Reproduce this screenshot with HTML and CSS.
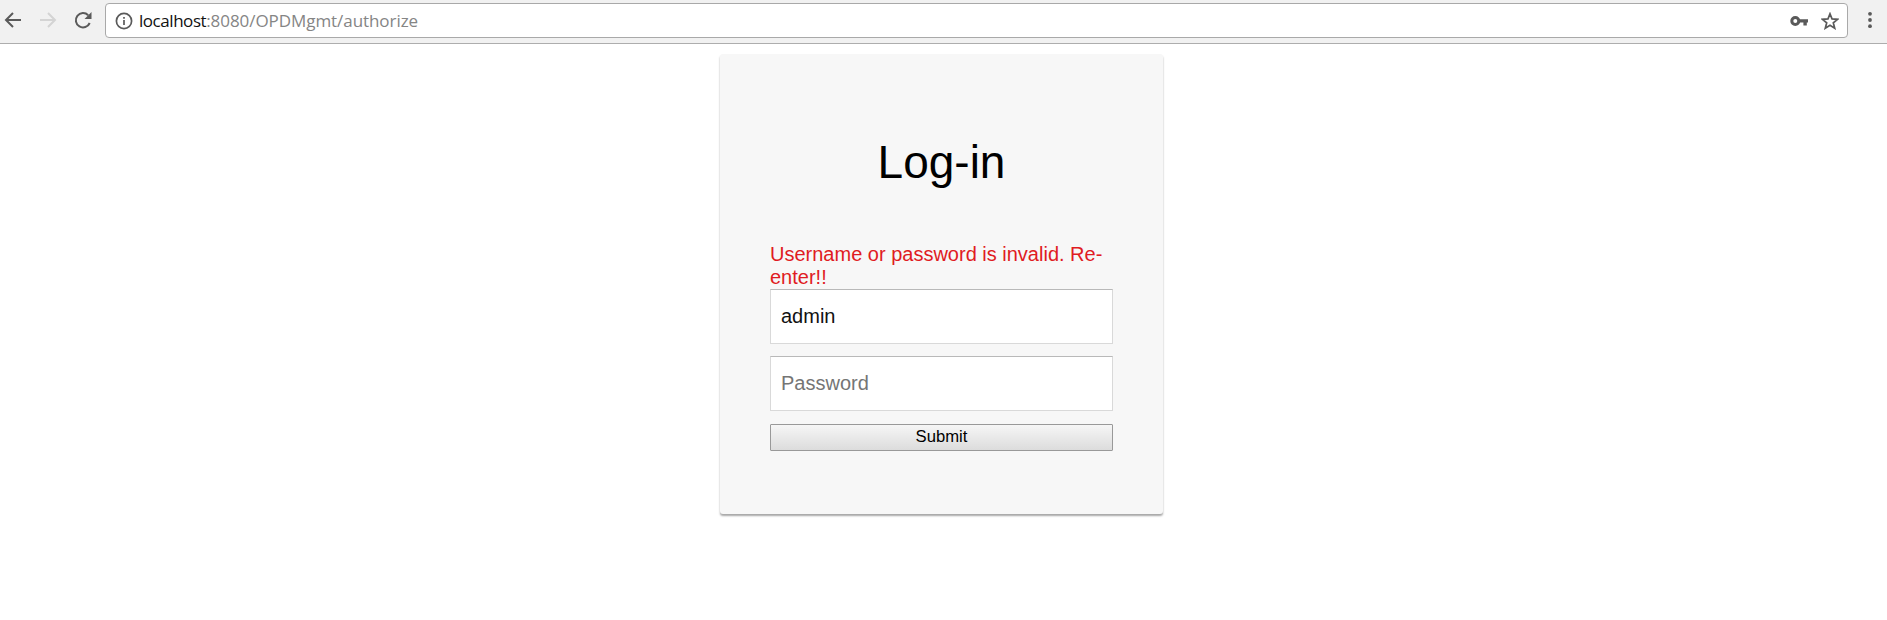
FILE: index.html
```html
<!DOCTYPE html>
<html lang="en">
<head>
<meta charset="utf-8">
<title>Log-in</title>
<link rel="stylesheet" href="styles.css">
</head>
<body>
<header class="toolbar">
  <nav class="nav">
    <svg class="icon" width="20" height="20" viewBox="0 0 20 20"><path d="M18 10H3M10 3L3 10l7 7"/></svg>
    <svg class="icon icon-off" width="20" height="20" viewBox="0 0 20 20"><path d="M2 10h15M10 3l7 7-7 7"/></svg>
    <svg class="icon" width="20" height="20" viewBox="0 0 20 20"><path d="M16.700 13A7.200 7.200 0 1 1 15.200 5.200"/><path class="solid" d="M18.500 2v7h-7z"/></svg>
  </nav>
  <div class="omnibox">
    <svg class="icon info" width="18" height="18" viewBox="0 0 18 18"><circle cx="9" cy="9" r="7.6"/><path d="M9 8v5M9 5v1.800"/></svg>
    <div class="url"><span class="host">localhost</span><span class="path">:8080/OPDMgmt/authorize</span></div>
    <svg class="key" width="18" height="12" viewBox="0 0 18 12"><path class="ring" d="M5.300 2.500a3.500 3.500 0 1 0 0 7 3.500 3.500 0 0 0 0-7z"/><path class="solid" d="M8.500 4.200H18v3.200h-1.200v3h-3.400v-3H8.500z"/></svg>
    <svg class="icon star" width="18" height="18" viewBox="0 0 18 18"><path d="M9 1.800l2 5.100 5.500.4-4.200 3.500 1.400 5.400L9 13.200l-4.700 3 1.400-5.400L1.500 7.300 7 6.900z"/></svg>
  </div>
  <svg class="menu" width="6" height="18" viewBox="0 0 6 18"><circle cx="3" cy="2.800" r="1.900"/><circle cx="3" cy="9" r="1.900"/><circle cx="3" cy="15.200" r="1.900"/></svg>
</header>
<main class="page">
  <form class="card">
    <h1 class="title">Log-in</h1>
    <div class="error">Username or password is invalid. Re-enter!!</div>
    <input class="field" type="text" value="admin" aria-label="Username">
    <input class="field" type="password" placeholder="Password" aria-label="Password">
    <button class="submit" type="button">Submit</button>
  </form>
</main>
</body>
</html>
```
FILE: styles.css
```css
* { box-sizing: border-box; }
body {
  min-height: 100vh;
  margin: 0;
  background: #fff;
  font-family: "Liberation Sans", Arial, sans-serif;
}
.toolbar {
  display: flex;
  align-items: flex-start;
  height: 44px;
  padding: 3px 14px 0 3px;
  background: #f1f1f1;
  border-bottom: 1px solid #adadad;
}
.nav {
  display: flex;
  gap: 15px;
  width: 102px;
  padding-top: 7px;
}
.icon {
  fill: none;
  stroke: #5a5a5a;
  stroke-width: 2;
}
.icon-off { stroke: #d4d4d4; }
.solid { fill: #5a5a5a; stroke: none; }
.omnibox {
  display: flex;
  flex: 1;
  align-items: center;
  height: 35px;
  padding: 0 8px;
  background: #fff;
  border: 1px solid #a9a9a9;
  border-radius: 4px;
}
.info { margin-left: 1px; stroke-width: 1.7; }
.url {
  flex: 1;
  margin-left: 6px;
  font: 17px/24px "Open Sans", "Noto Sans", sans-serif;
  white-space: nowrap;
}
.host { color: #111; letter-spacing: -0.45px; }
.path { color: #858585; letter-spacing: -0.06px; }
.key { margin-right: 13px; }
.ring { fill: none; stroke: #5a5a5a; stroke-width: 3; }
.star { stroke-width: 1.7; }
.menu { margin: 8px 0 0 19px; fill: #5a5a5a; }
.page {
  display: flex;
  justify-content: center;
  padding: 10px 4px 20px 0;
}
.card {
  width: 443px;
  height: 460px;
  padding: 50px;
  background: #f7f7f7;
  border-radius: 3px;
  box-shadow: 0 2px 2px rgba(0, 0, 0, 0.35);
}
.title {
  margin: 31px 0 54px;
  font-size: 46px;
  font-weight: 400;
  line-height: 54px;
  text-align: center;
}
.error {
  color: #e01b22;
  font-size: 20px;
  line-height: 23px;
}
.field {
  display: block;
  width: 100%;
  height: 55px;
  margin: 0 0 12px;
  padding: 0 10px;
  color: #111;
  background: #fff;
  border: 1px solid #d9d9d9;
  border-top-color: #b9b9b9;
  font: 20px "Liberation Sans", Arial, sans-serif;
}
.field::placeholder { color: #757575; }
.submit {
  display: block;
  width: 100%;
  height: 27px;
  margin-top: 13px;
  padding: 0 0 1px;
  color: #000;
  background: linear-gradient(#f6f6f6, #dcdcdc);
  border: 1px solid #999;
  border-radius: 1px;
  font: 16.67px "Liberation Sans", Arial, sans-serif;
}
```
